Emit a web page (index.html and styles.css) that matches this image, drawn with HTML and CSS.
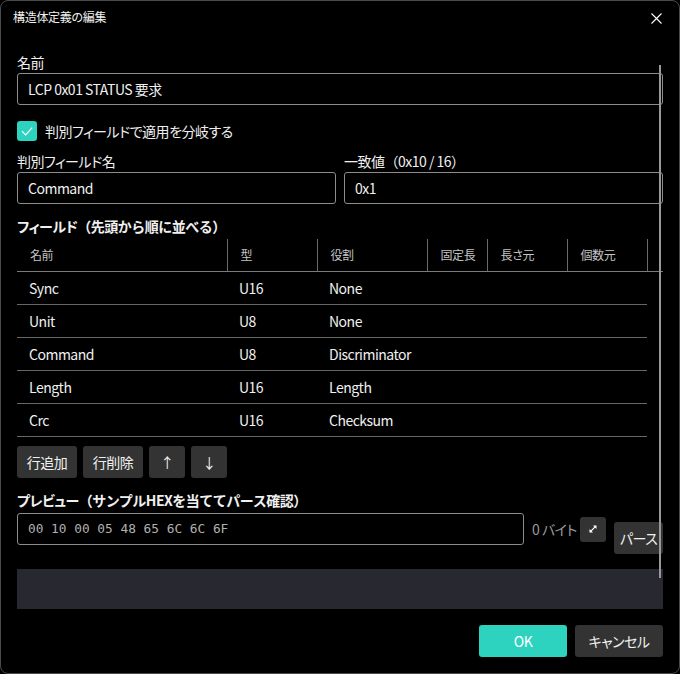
FILE: index.html
```html
<!DOCTYPE html>
<html lang="ja">
<head>
  <meta charset="UTF-8" />
  <meta name="viewport" content="width=device-width, initial-scale=1.0" />
  <title>構造体定義の編集</title>
  <link rel="stylesheet" href="styles.css">
</head>
<body>
  <div class="dialog">
    <div class="titlebar">
      <span class="title">構造体定義の編集</span>
      <button class="close" aria-label="閉じる">
        <svg width="11" height="11" viewBox="0 0 11 11">
          <path d="M0.5 0.5 L10.5 10.5 M10.5 0.5 L0.5 10.5" stroke="#fff" stroke-width="1.1" fill="none"/>
        </svg>
      </button>
    </div>

    <div class="content">
      <label class="field-label">名前</label>
      <input type="text" class="text-input" value="LCP 0x01 STATUS 要求" />

      <label class="check-row">
        <span class="checkbox">
          <svg width="20" height="20" viewBox="0 0 20 20">
            <path d="M5 10.2 L8.6 13.8 L15.2 6.6" stroke="#fff" stroke-width="1.2" fill="none"/>
          </svg>
        </span>
        判別フィールドで適用を分岐する
      </label>

      <div class="two-col">
        <div>
          <label class="field-label">判別フィールド名</label>
          <input type="text" class="text-input" value="Command" />
        </div>
        <div>
          <label class="field-label">一致値<span class="paren">（0x10 / 16）</span></label>
          <input type="text" class="text-input" value="0x1" />
        </div>
      </div>

      <h3 class="section-title">フィールド<span class="paren">（先頭から順に並べる）</span></h3>

      <table class="fields">
        <colgroup>
          <col style="width:210px"><col style="width:90px"><col style="width:110px">
          <col style="width:60px"><col style="width:80px"><col style="width:80px"><col>
        </colgroup>
        <thead>
          <tr>
            <th>名前</th><th>型</th><th>役割</th><th>固定長</th><th>長さ元</th><th>個数元</th><th class="filler"></th>
          </tr>
        </thead>
        <tbody id="fieldRows"></tbody>
      </table>

      <div class="row-actions">
        <button class="btn btn-row">行追加</button>
        <button class="btn btn-row">行削除</button>
        <button class="btn btn-arrow">↑</button>
        <button class="btn btn-arrow">↓</button>
      </div>

      <h3 class="section-title preview-title">プレビュー<span class="paren">（サンプルHEXを当ててパース確認）</span></h3>

      <div class="hex-row">
        <input type="text" class="text-input hex-input" value="00 10 00 05 48 65 6C 6C 6F" />
        <span class="byte-count">0 バイト</span>
        <button class="btn btn-icon" aria-label="展開">
          <svg width="10" height="10" viewBox="0 0 10 10">
            <path d="M2.2 7.8 L7.8 2.2" stroke="#fff" stroke-width="1.2"/>
            <path d="M5 1.5 L8.5 1.5 L8.5 5 Z" fill="#fff"/>
            <path d="M1.5 5 L1.5 8.5 L5 8.5 Z" fill="#fff"/>
          </svg>
        </button>
        <button class="btn btn-parse">パース</button>
      </div>

      <div class="parse-result"></div>
    </div>

    <div class="footer">
      <button class="btn btn-primary">OK</button>
      <button class="btn btn-footer">キャンセル</button>
    </div>

    <div class="scrollbar"></div>
  </div>

  <script>
    const fields = [
      { name: 'Sync', type: 'U16', role: 'None' },
      { name: 'Unit', type: 'U8', role: 'None' },
      { name: 'Command', type: 'U8', role: 'Discriminator' },
      { name: 'Length', type: 'U16', role: 'Length' },
      { name: 'Crc', type: 'U16', role: 'Checksum' }
    ];

    const tbody = document.getElementById('fieldRows');
    fields.forEach(f => {
      const row = tbody.insertRow();
      row.innerHTML = `<td>${f.name}</td><td>${f.type}</td><td>${f.role}</td><td></td><td></td><td></td><td class="filler"></td>`;
    });
  </script>
</body>
</html>
```

FILE: styles.css
```css
* {
  box-sizing: border-box;
}
body {
  margin: 0;
  background: #000;
  color: #f0f0f0;
  font-family: "Noto Sans CJK JP", "Noto Sans", sans-serif;
  font-size: 14px;
  font-feature-settings: "palt";
  letter-spacing: -0.5px;
}
.dialog {
  position: relative;
  width: 680px;
  height: 674px;
  background: #000;
  border: 1px solid #4a4a4a;
  border-radius: 8px;
  display: flex;
  flex-direction: column;
}
.titlebar {
  height: 32px;
  display: flex;
  align-items: center;
  justify-content: space-between;
  padding: 0 17px 0 12px;
}
.title {
  font-size: 12px;
  line-height: 16px;
  letter-spacing: -0.3px;
}
.close {
  background: none;
  border: none;
  padding: 0;
  width: 11px;
  height: 11px;
  display: flex;
  margin-top: 2px;
}
.content {
  padding: 19px 16px 0;
}
/* full-width brackets keep their normal advance */
.paren {
  font-feature-settings: normal;
}
.field-label {
  display: block;
  line-height: 20px;
  margin-bottom: 1px;
}
.text-input {
  display: block;
  width: 100%;
  height: 32px;
  background: #000;
  border: 1px solid #8c8c8c;
  border-radius: 3px;
  color: #f0f0f0;
  font-family: inherit;
  font-size: 14px;
  font-feature-settings: "palt";
  letter-spacing: -0.5px;
  padding: 0 10px;
  outline: none;
}
.check-row {
  display: flex;
  align-items: center;
  gap: 8px;
  margin-top: 16px;
  line-height: 20px;
}
.checkbox {
  width: 20px;
  height: 20px;
  border-radius: 3px;
  background: #2ed3c0;
  display: flex;
}
.two-col {
  display: grid;
  grid-template-columns: 1fr 1fr;
  gap: 8px;
  margin-top: 10px;
}
.section-title {
  margin: 12px 0 0;
  font-size: 14px;
  font-weight: 700;
  line-height: 20px;
}
.fields {
  width: 100%;
  margin-top: 3px;
  border-collapse: collapse;
  table-layout: fixed;
}
.fields th {
  height: 32px;
  padding: 0 0 0 13px;
  text-align: left;
  font-size: 12px;
  font-weight: 400;
  letter-spacing: -0.4px;
  color: #c4c4c4;
  border-right: 1px solid #6a6a6a;
  border-bottom: 1px solid #7a7a7a;
}
.fields th.filler {
  border-right: none;
}
.fields td {
  height: 33px;
  padding: 0 0 0 12px;
  border-bottom: 1px solid #666;
  white-space: nowrap;
}
.fields td.filler {
  border-bottom: none;
}
.row-actions {
  display: flex;
  gap: 6px;
  margin-top: 9px;
}
.btn {
  height: 32px;
  padding: 0 9px;
  border: none;
  border-radius: 3px;
  background: #333;
  color: #f0f0f0;
  font-family: inherit;
  font-size: 14px;
  font-feature-settings: "palt";
  letter-spacing: -0.5px;
  cursor: pointer;
}
.btn-row {
  width: 60px;
  padding: 0;
}
.btn-arrow {
  width: 36px;
  padding: 0;
}
.preview-title {
  margin-top: 12px;
}
.hex-row {
  display: flex;
  align-items: flex-start;
  margin-top: 3px;
}
.hex-input {
  flex: 1;
  font-family: "DejaVu Sans Mono", monospace;
  font-size: 12.8px;
  letter-spacing: 0;
  color: #b0b0b0;
}
.byte-count {
  width: 41px;
  margin-left: 8px;
  line-height: 32px;
  color: #9a9a9a;
  white-space: nowrap;
}
.btn-icon {
  width: 26px;
  height: 25px;
  margin: 4px 0 0 7px;
  padding: 0;
  display: flex;
  align-items: center;
  justify-content: center;
}
.btn-parse {
  width: 49px;
  margin: 9px 0 0 8px;
  padding: 0;
}
.parse-result {
  height: 40px;
  margin-top: 15px;
  background: #282831;
}
.footer {
  margin-top: auto;
  display: flex;
  justify-content: flex-end;
  gap: 8px;
  padding: 0 16px 16px;
}
.btn-primary,
.btn-footer {
  width: 88px;
}
.btn-primary {
  background: #2ed3c0;
  color: #fff;
}
.scrollbar {
  position: absolute;
  top: 64px;
  right: 18px;
  width: 2px;
  height: 513px;
  background: #999;
}
```
